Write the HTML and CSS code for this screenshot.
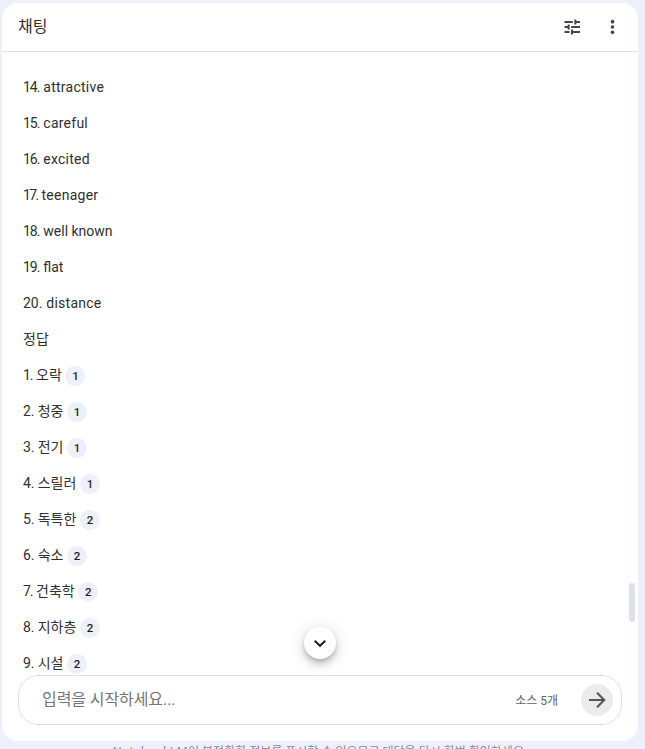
FILE: index.html
```html
<!DOCTYPE html>
<html lang="ko">
<head>
    <meta charset="UTF-8">
    <meta name="viewport" content="width=device-width, initial-scale=1.0">
    <title>채팅</title>
    <link rel="stylesheet" href="styles.css">
</head>
<body>
    <section class="panel">
        <header class="panel-header">
            <h1>채팅</h1>
            <div class="header-actions">
                <button class="icon-button" aria-label="설정">
                    <svg width="20" height="20" viewBox="0 0 24 24" fill="currentColor"><path d="M3 4.8h10v2.4H3zM14.8 3h2.4v1.8H21.6v2.4h-4.4V9h-2.4zM3 10.8h3.8V9h2.4v6H6.8v-1.8H3zM11 10.8h10.6v2.4H11zM3 16.8h6v2.4H3zM10.8 15h2.4v1.8h8.4v2.4h-8.4V21h-2.4z"/></svg>
                </button>
                <button class="icon-button" aria-label="더보기">
                    <svg width="20" height="20" viewBox="0 0 24 24" fill="currentColor"><circle cx="12.6" cy="5.6" r="2.2"/><circle cx="12.6" cy="12" r="2.2"/><circle cx="12.6" cy="18.4" r="2.2"/></svg>
                </button>
            </div>
        </header>

        <div class="messages">
            <p><span class="num teen">14.</span><span class="word">attractive</span></p>
            <p><span class="num teen">15.</span><span class="word">careful</span></p>
            <p><span class="num teen">16.</span><span class="word">excited</span></p>
            <p><span class="num seventeen">17.</span><span class="word">teenager</span></p>
            <p><span class="num teen">18.</span><span>well known</span></p>
            <p><span class="num teen">19.</span><span>flat</span></p>
            <p><span class="num twenty">20.</span><span class="word">distance</span></p>
            <p>정답</p>
            <p><span class="num slim">1.</span><span>오락</span><span class="citation">1</span></p>
            <p><span class="num">2.</span><span>청중</span><span class="citation">1</span></p>
            <p><span class="num">3.</span><span>전기</span><span class="citation">1</span></p>
            <p><span class="num">4.</span><span>스릴러</span><span class="citation">1</span></p>
            <p><span class="num">5.</span><span>독특한</span><span class="citation">2</span></p>
            <p><span class="num">6.</span><span>숙소</span><span class="citation">2</span></p>
            <p><span class="num slim">7.</span><span>건축학</span><span class="citation">2</span></p>
            <p><span class="num">8.</span><span>지하층</span><span class="citation">2</span></p>
            <p><span class="num">9.</span><span>시설</span><span class="citation">2</span></p>
            <div class="scroll-thumb"></div>
            <button class="scroll-down" aria-label="아래로 이동">
                <svg width="20" height="20" viewBox="0 0 20 20" fill="none" stroke="currentColor" stroke-width="2"><path d="M4.7 7.7l5.3 5.1 5.3-5.1"/></svg>
            </button>
        </div>

        <div class="composer">
            <span class="placeholder">입력을 시작하세요...</span>
            <span class="source-count">소스 5개</span>
            <button class="send" aria-label="보내기">
                <svg width="24" height="24" viewBox="0 0 24 24" fill="none" stroke="currentColor" stroke-width="2"><path d="M4 12h15M12 4.7l7.3 7.3-7.3 7.3"/></svg>
            </button>
        </div>
    </section>
    <footer class="disclaimer"><span class="product">NotebookLM</span>이 부정확한 정보를 표시할 수 있으므로 대답을 다시 한번 확인하세요.</footer>
</body>
</html>
```
FILE: styles.css
```css
* {
    box-sizing: border-box;
}

body {
    margin: 0;
    padding: 3px 7px 0 2px;
    height: 749px;
    overflow: hidden;
    background: #edeffa;
    color: #303030;
    font-family: Roboto, "Noto Sans CJK KR", sans-serif;
}

h1,
p {
    margin: 0;
}

button {
    display: flex;
    align-items: center;
    justify-content: center;
    padding: 0;
    border: none;
    background: none;
    color: #444746;
}

.panel {
    display: flex;
    flex-direction: column;
    height: 738px;
    padding-bottom: 16px;
    background: #fff;
    border-radius: 16px;
}

.panel-header {
    display: flex;
    align-items: center;
    justify-content: space-between;
    height: 49px;
    padding: 0 16px;
    border-bottom: 1px solid #dde1eb;
}

.panel-header h1 {
    font-size: 16px;
    font-weight: 400;
    line-height: 24px;
}

.header-actions {
    display: flex;
    gap: 20px;
}

.icon-button {
    width: 20px;
    height: 20px;
}

.messages {
    position: relative;
    flex: 1;
    min-height: 0;
    padding: 25px 21px 0;
    overflow: hidden;
    font-size: 14px;
}

.messages p {
    display: flex;
    align-items: center;
    height: 20px;
    margin-bottom: 16px;
    line-height: 20px;
    white-space: nowrap;
}

.num {
    width: 10.7px;
    margin-right: 4px;
}

.num.slim {
    width: 9px;
    letter-spacing: -1.2px;
}

.num.teen {
    width: 16.3px;
    letter-spacing: -1px;
}

.num.seventeen {
    width: 14.5px;
    letter-spacing: -1.6px;
}

.num.twenty {
    width: 19.3px;
}

.word {
    letter-spacing: 0.25px;
}

.citation {
    width: 20px;
    height: 20px;
    margin-top: 2px;
    margin-left: 3.7px;
    border-radius: 50%;
    background: #edeffa;
    color: #1f1f1f;
    font-size: 11.5px;
    font-weight: 500;
    line-height: 21px;
    text-align: center;
}

.scroll-thumb {
    position: absolute;
    top: 531px;
    right: 3px;
    width: 6px;
    height: 39px;
    border-radius: 3px;
    background: #dde1eb;
}

.scroll-down {
    position: absolute;
    left: 302px;
    bottom: 16px;
    width: 32px;
    height: 32px;
    border-radius: 50%;
    background: #fff;
    color: #1f1f1f;
    box-shadow: 0 3px 5px -1px rgba(0, 0, 0, 0.2), 0 6px 10px rgba(0, 0, 0, 0.14), 0 1px 18px rgba(0, 0, 0, 0.12);
}

.composer {
    display: flex;
    align-items: center;
    height: 50px;
    margin: 0 16px;
    padding: 0 8px 0 23px;
    border: 1px solid #dde1eb;
    border-radius: 20px;
    background: #fff;
}

.placeholder {
    flex: 1;
    color: #757575;
    font-size: 16px;
    line-height: 24px;
    letter-spacing: -0.08px;
}

.source-count {
    margin-right: 23px;
    padding-bottom: 2px;
    color: #5f6368;
    font-size: 12px;
}

.send {
    width: 32px;
    height: 32px;
    border-radius: 50%;
    background: #ebebeb;
    color: #555;
}

.disclaimer {
    padding-top: 1px;
    color: #8b8e98;
    font-size: 12px;
    line-height: 20px;
    text-align: center;
}

.product {
    letter-spacing: 0.6px;
}
```
